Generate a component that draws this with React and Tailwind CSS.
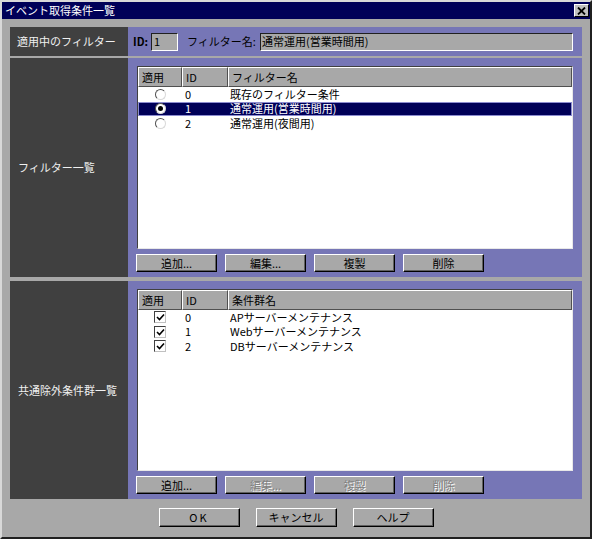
import React from "react";

const btnBase =
  "w-[81px] flex items-center justify-center bg-[#a8a8a8] border border-t-white border-l-white border-r-black border-b-black shadow-[inset_-1px_-1px_0_#606060] text-[11px] leading-none";

function Btn({ children, disabled, h = "h-[18px]" }) {
  return (
    <div
      className={`${btnBase} ${h} ${
        disabled ? "text-[#808080] [text-shadow:1px_1px_0_#ffffff]" : "text-black"
      }`}
    >
      {children}
    </div>
  );
}

function HeaderCell({ children, className = "" }) {
  return (
    <div
      className={`h-full flex items-center pl-[3px] bg-[#a8a8a8] border border-t-white border-l-white border-r-[#505050] border-b-[#505050] text-black ${className}`}
    >
      {children}
    </div>
  );
}

function Radio({ checked }) {
  return (
    <div className="w-[11px] h-[11px] rounded-full bg-white border border-t-[#505050] border-l-[#505050] border-r-[#d8d8d8] border-b-[#d8d8d8] flex items-center justify-center">
      {checked && <div className="w-[5px] h-[5px] rounded-full bg-black" />}
    </div>
  );
}

function Check() {
  return (
    <div className="w-[12px] h-[12px] bg-white border border-t-[#404040] border-l-[#404040] border-r-[#c0c0c0] border-b-[#c0c0c0] flex items-center justify-center">
      <svg width="9" height="8" viewBox="0 0 9 8">
        <path d="M1 4 L3.5 6.5 L8 1.5" stroke="black" strokeWidth="1.6" fill="none" />
      </svg>
    </div>
  );
}

function Table({ col3, rows, kind }) {
  return (
    <div className="flex-1 bg-white border border-t-[#404040] border-l-[#404040] border-r-[#e8e8e8] border-b-[#e8e8e8] flex flex-col overflow-hidden">
      <div className="h-[20px] flex shrink-0">
        <HeaderCell className="w-[44px]">適用</HeaderCell>
        <HeaderCell className="w-[46px]">ID</HeaderCell>
        <HeaderCell className="flex-1">{col3}</HeaderCell>
      </div>
      {rows.map((r) => (
        <div
          key={r.id}
          className={`h-[14.5px] flex items-center text-[11px] leading-none ${
            r.sel
              ? "bg-[#000058] text-white outline outline-1 -outline-offset-1 outline-[#8c8cd0]"
              : "text-black"
          }`}
        >
          <div className="w-[44px] flex justify-center">
            {kind === "radio" ? <Radio checked={r.sel} /> : <Check />}
          </div>
          <div className="w-[46px] pl-[3px]">{r.id}</div>
          <div className="flex-1 pl-[2px]">{r.name}</div>
        </div>
      ))}
    </div>
  );
}

function Section({ label, h, mt, children }) {
  return (
    <div className={`flex ${h} ${mt}`}>
      <div className="w-[118px] bg-[#404040] text-[#f0f0f0] flex items-center pl-[8px] text-[11px]">
        {label}
      </div>
      <div className="flex-1 bg-[#7676b6] flex flex-col pl-[9px] pr-[9px] pt-[8px] pb-[5px]">
        {children}
      </div>
    </div>
  );
}

export default function App() {
  return (
    <div className="w-[592px] h-[539px] bg-[#a8a8a8] border-2 border-t-[#d8d8d8] border-l-[#d8d8d8] border-r-[#202020] border-b-[#202020] flex flex-col font-['Noto_Sans_CJK_JP',sans-serif] text-[11px] overflow-hidden">
      {/* Title bar */}
      <div className="h-[17px] bg-[#000058] flex items-center justify-between pl-[3px] pr-[1px] shrink-0">
        <span className="text-white text-[11px] leading-none">イベント取得条件一覧</span>
        <div className="w-[15px] h-[13px] bg-[#c0c0c0] border border-t-white border-l-white border-r-black border-b-black flex items-center justify-center">
          <svg width="9" height="8" viewBox="0 0 9 8">
            <path d="M1 0.5 L8 7.5 M8 0.5 L1 7.5" stroke="black" strokeWidth="1.8" />
          </svg>
        </div>
      </div>

      <div className="flex flex-col px-2 pt-2">
        {/* Row 1 */}
        <div className="flex h-[29px]">
          <div className="w-[118px] bg-[#404040] text-[#f0f0f0] flex items-center pl-[7px] text-[11px]">
            適用中のフィルター
          </div>
          <div className="flex-1 bg-[#7676b6] flex items-center pl-[5px] pr-[9px]">
            <span className="w-[18px] font-bold text-black text-[11px]">ID:</span>
            <div className="w-[27px] h-[18px] bg-[#a8a8a8] border border-t-[#202020] border-l-[#202020] border-r-white border-b-white flex items-center pl-[2px] text-black">
              1
            </div>
            <span className="ml-[9px] w-[73px] text-black text-[11px]">フィルター名:</span>
            <div className="flex-1 h-[18px] bg-[#a8a8a8] border border-t-[#202020] border-l-[#202020] border-r-white border-b-white flex items-center pl-[1px] text-black">
              通常運用(営業時間用)
            </div>
          </div>
        </div>

        {/* Row 2 */}
        <Section label="フィルター一覧" h="h-[219px]" mt="mt-[2px]">
          <Table
            col3="フィルター名"
            kind="radio"
            rows={[
              { id: "0", name: "既存のフィルター条件" },
              { id: "1", name: "通常運用(営業時間用)", sel: true },
              { id: "2", name: "通常運用(夜間用)" },
            ]}
          />
          <div className="flex gap-[8px] mt-[5px] -ml-[1px]">
            <Btn>追加...</Btn>
            <Btn>編集...</Btn>
            <Btn>複製</Btn>
            <Btn>削除</Btn>
          </div>
        </Section>

        {/* Row 3 */}
        <Section label="共通除外条件群一覧" h="h-[218px]" mt="mt-[4px]">
          <Table
            col3="条件群名"
            kind="check"
            rows={[
              { id: "0", name: "APサーバーメンテナンス" },
              { id: "1", name: "Webサーバーメンテナンス" },
              { id: "2", name: "DBサーバーメンテナンス" },
            ]}
          />
          <div className="flex gap-[8px] mt-[5px] -ml-[1px]">
            <Btn>追加...</Btn>
            <Btn disabled>編集...</Btn>
            <Btn disabled>複製</Btn>
            <Btn disabled>削除</Btn>
          </div>
        </Section>

        {/* Bottom buttons */}
        <div className="flex justify-center gap-[16px] mt-[9px]">
          <Btn h="h-[19px]">
            <span className="tracking-[2px]">OK</span>
          </Btn>
          <Btn h="h-[19px]">キャンセル</Btn>
          <Btn h="h-[19px]">ヘルプ</Btn>
        </div>
      </div>
    </div>
  );
}
